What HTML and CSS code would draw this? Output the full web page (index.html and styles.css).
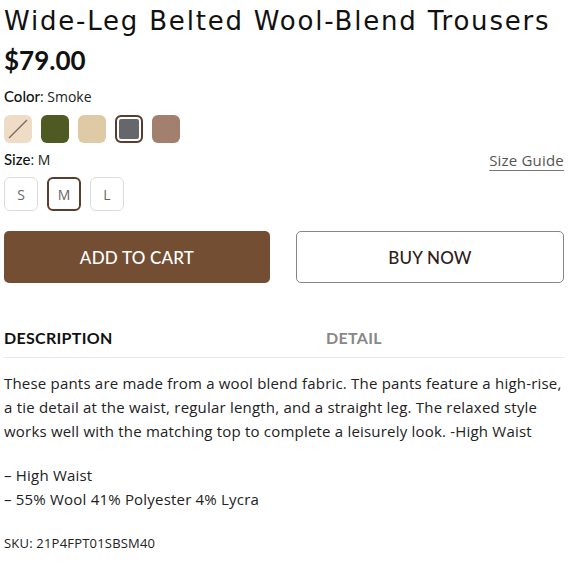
FILE: index.html
```html
<!DOCTYPE html>
<html>
<head>
<meta charset="utf-8">
<link rel="stylesheet" href="styles.css">
</head>
<body>
<div class="product">
  <h1 class="title">Wide-Leg Belted Wool-Blend Trousers</h1>
  <div class="price">$79.00</div>
  <div class="label"><span class="label-key">Color</span>: Smoke</div>
  <div class="swatches">
    <span class="swatch sw-peach"><svg class="slash" viewBox="0 0 28 28"><line x1="5" y1="23" x2="23" y2="5" stroke="#7d6557" stroke-width="1.3"/></svg></span>
    <span class="swatch sw-olive"></span>
    <span class="swatch sw-beige"></span>
    <span class="swatch sw-gray selected"></span>
    <span class="swatch sw-brown"></span>
  </div>
  <div class="size-row">
    <div class="label"><span class="label-key">Size</span>: M</div>
    <a class="size-guide">Size Guide</a>
  </div>
  <div class="sizes">
    <span class="size">S</span>
    <span class="size selected">M</span>
    <span class="size">L</span>
  </div>
  <div class="actions">
    <button class="btn btn-cart">ADD TO CART</button>
    <button class="btn btn-buy">BUY NOW</button>
  </div>
  <div class="tabs">
    <div class="tab active">DESCRIPTION</div>
    <div class="tab">DETAIL</div>
  </div>
  <div class="desc">
    <p>These pants are made from a wool blend fabric. The pants feature a high-rise, a tie detail at the waist, regular length, and a straight leg. The relaxed style works well with the matching top to complete a leisurely look. -High Waist</p>
    <p>– High Waist<br>– 55% Wool 41% Polyester 4% Lycra</p>
    <p class="sku">SKU: 21P4FPT01SBSM40</p>
  </div>
</div>
</body>
</html>
```
FILE: styles.css
```css
* { box-sizing: border-box; }
body {
  margin: 0;
  background: #fff;
  color: #1a1a1a;
  font-family: "Open Sans", "Noto Sans", sans-serif;
}
.product {
  width: 564px;
  padding: 0 0 0 4px;
}
.title {
  margin: 0;
  padding-top: 4px;
  font-family: "DejaVu Sans", sans-serif;
  font-weight: 400;
  font-size: 26px;
  line-height: 34px;
  letter-spacing: 1.8px;
  color: #111;
}
.price {
  margin-top: 6px;
  font-family: "Lato", sans-serif;
  font-weight: 700;
  font-size: 26px;
  line-height: 32px;
  color: #111;
}
.label {
  margin-top: 10px;
  font-size: 14px;
  line-height: 20px;
  color: #222;
}
.label-key {
  font-family: "Lato", sans-serif;
  font-size: 15px;
  font-weight: 500;
  color: #111;
}
.swatches {
  display: flex;
  gap: 9px;
  margin-top: 8px;
  align-items: center;
}
.swatch {
  width: 28px;
  height: 28px;
  border-radius: 6px;
  display: block;
}
.slash { width: 28px; height: 28px; display: block; }
.sw-peach { background: #efdcc6; }
.sw-olive { background: #4f5a22; }
.sw-beige { background: #dfcaa6; }
.sw-gray { background: #66676b; }
.sw-brown { background: #a37f6d; }
.swatch.selected {
  border: 2px solid #5a3e2c;
  box-shadow: inset 0 0 0 2px #fff;
}
.size-row {
  display: flex;
  justify-content: space-between;
  align-items: flex-end;
}
.size-row .label { margin-top: 6px; }
.size-guide {
  font-size: 15px;
  color: #555;
  text-decoration: underline;
  text-decoration-color: #777;
  text-underline-offset: 4px;
  line-height: 20px;
  letter-spacing: 0.2px;
}
.sizes {
  display: flex;
  gap: 9px;
  margin-top: 7px;
}
.size {
  width: 34px;
  height: 34px;
  border: 1px solid #dcdcdc;
  border-radius: 6px;
  display: flex;
  align-items: center;
  justify-content: center;
  font-size: 14px;
  color: #666;
}
.size.selected {
  border: 2px solid #5a3e2c;
}
.actions {
  display: flex;
  gap: 26px;
  margin-top: 20px;
}
.btn {
  flex: 1;
  height: 52px;
  border-radius: 5px;
  font-family: "Lato", sans-serif;
  font-size: 17px;
  font-weight: 500;
  letter-spacing: 0.2px;
  cursor: pointer;
}
.btn-cart {
  background: #744e33;
  color: #fff;
  border: none;
}
.btn-buy {
  background: #fff;
  color: #2e211a;
  border: 1px solid #8a8580;
}
.tabs {
  display: flex;
  margin-top: 37px;
  border-bottom: 1px solid #e8e8e8;
  height: 38px;
}
.tab {
  font-family: "Lato", sans-serif;
  font-weight: 700;
  font-size: 16px;
  line-height: 36px;
  color: #888;
  letter-spacing: 0.3px;
}
.tab.active { color: #111; width: 322px; }
.desc {
  margin-top: 13px;
  font-size: 15px;
  line-height: 24px;
  letter-spacing: 0.2px;
  color: #222;
}
.desc p { margin: 0 0 20px; }
.desc .sku { font-size: 13px; margin: 0; }
```
